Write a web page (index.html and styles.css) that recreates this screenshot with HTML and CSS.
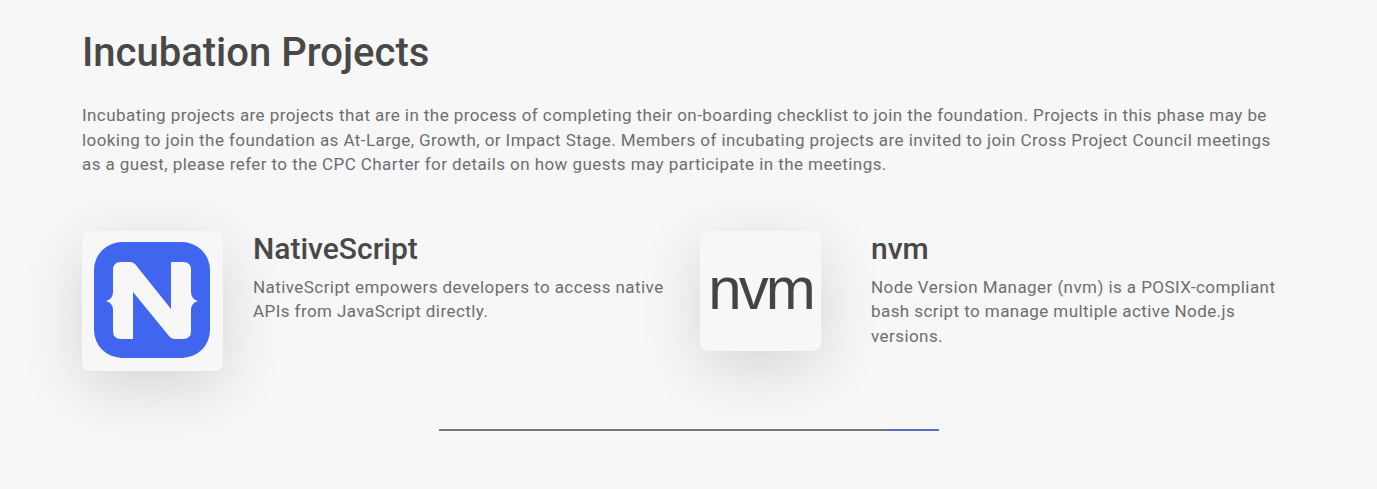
FILE: index.html
```html
<!DOCTYPE html>
<html lang="en">
<head>
    <meta charset="UTF-8">
    <title>Incubation Projects</title>
    <link rel="stylesheet" href="styles.css">
</head>
<body>
    <section class="section">
        <h2>Incubation Projects</h2>
        <p class="intro">Incubating projects are projects that are in the process of completing their on-boarding checklist to join the foundation. Projects in this phase may be looking to join the foundation as At-Large, Growth, or Impact Stage. Members of incubating projects are invited to join Cross Project Council meetings as a guest, please refer to the <a href="#">CPC Charter</a> for details on how guests may participate in the meetings.</p>

        <div class="projects">
            <div class="project">
                <div class="logo logo-ns">
                    <svg width="116" height="116" viewBox="0 0 116 116">
                        <rect width="116" height="116" rx="28" fill="#4066f0"/>
                        <path d="M19 28 Q19 20 27 20 H36 Q39 20 41 22 L77 67 V20 H89 Q97 20 97 28 V50 Q97 57 104 59 Q97 61 97 68 V89 Q97 97 89 97 H80 Q77 97 75 94 L39 50 V97 H27 Q19 97 19 89 V68 Q19 61 12 59 Q19 57 19 50 Z" fill="#f7f7f7"/>
                    </svg>
                </div>
                <div class="info">
                    <h3>NativeScript</h3>
                    <p>NativeScript empowers developers to access native APIs from JavaScript directly.</p>
                </div>
            </div>
            <div class="project">
                <div class="logo logo-nvm">nvm</div>
                <div class="info">
                    <h3>nvm</h3>
                    <p>Node Version Manager (nvm) is a POSIX-compliant bash script to manage multiple active Node.js versions.</p>
                </div>
            </div>
        </div>

        <div class="divider"></div>
    </section>
</body>
</html>
```

FILE: styles.css
```css
html, body { height: 100%; }
body { margin: 0; background: #f7f7f7; font-family: Roboto, sans-serif; color: #666; overflow: hidden; }
.section { padding: 29px 82px 0; }
h2 { margin: 0; font-size: 40px; line-height: 48px; font-weight: 500; color: #484848; }
.intro { margin: 26px 0 0; width: 1200px; font-size: 17px; line-height: 24.5px; letter-spacing: 0.43px; color: #6e6e6e; }
.intro a { color: #6b6b7b; text-decoration: none; }
.projects { display: grid; grid-template-columns: 618px 1fr; margin-top: 54px; }
.project { display: flex; align-items: flex-start; }
.logo { flex: none; box-sizing: border-box; background: #f7f7f7; border-radius: 8px; box-shadow: 0 16px 64px rgba(0,0,0,0.14); }
.logo-ns { width: 141px; height: 140px; padding: 11px 12px; margin-right: 30px; }
.logo-ns svg { display: block; }
.logo-nvm { display: flex; align-items: center; justify-content: center; width: 121px; height: 120px; margin-right: 50px; padding-bottom: 4px; font-family: "Liberation Sans", sans-serif; font-size: 60px; color: #444; letter-spacing: -3px; }
.info { width: 420px; }
h3 { margin: 0; font-size: 30px; line-height: 36px; font-weight: 500; color: #484848; }
.info p { margin: 8px 0 0; font-size: 17px; line-height: 24.5px; letter-spacing: 0.43px; color: #6e6e6e; }
.divider { width: 500px; height: 2px; margin: 58px auto 0; background: linear-gradient(90deg, #777 89%, #5b6fc4 90%); }
```
